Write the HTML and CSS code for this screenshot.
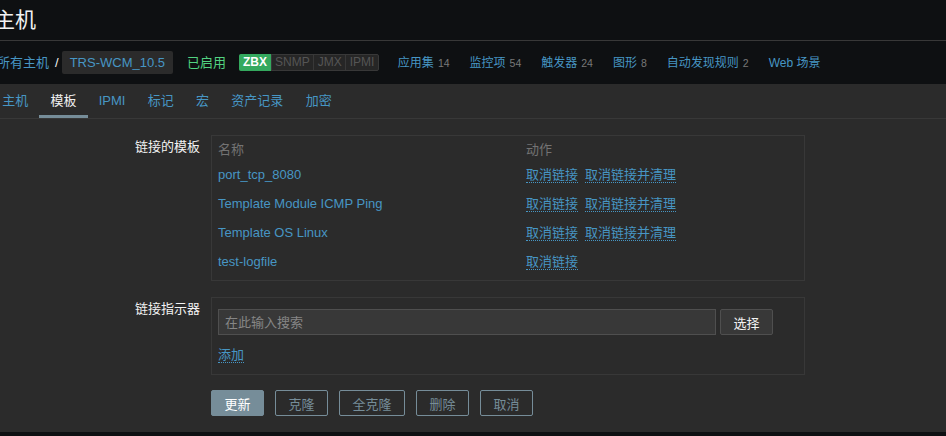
FILE: index.html
```html
<!DOCTYPE html>
<html lang="zh">
<head>
<meta charset="utf-8">
<title>主机</title>
<link rel="stylesheet" href="styles.css">
</head>
<body>
<div class="page">
  <header class="top">
    <h1 class="title">主机</h1>
  </header>
  <nav class="crumbs">
    <a class="link crumb-first">所有主机</a>
    <span class="slash">/</span>
    <span class="crumb-box">TRS-WCM_10.5</span>
    <span class="enabled">已启用</span>
    <span class="status">
      <span class="st st-on">ZBX</span><span class="st">SNMP</span><span class="st">JMX</span><span class="st">IPMI</span>
    </span>
    <ul class="entities">
      <li><a class="link">应用集</a><span class="count">14</span></li>
      <li><a class="link">监控项</a><span class="count">54</span></li>
      <li><a class="link">触发器</a><span class="count">24</span></li>
      <li><a class="link">图形</a><span class="count">8</span></li>
      <li><a class="link">自动发现规则</a><span class="count">2</span></li>
      <li><a class="link">Web 场景</a></li>
    </ul>
  </nav>
  <ul class="tabs">
    <li class="tab">主机</li>
    <li class="tab active">模板</li>
    <li class="tab">IPMI</li>
    <li class="tab">标记</li>
    <li class="tab">宏</li>
    <li class="tab">资产记录</li>
    <li class="tab">加密</li>
  </ul>
  <main class="form">
    <div class="field">
      <label class="label">链接的模板</label>
      <div class="box tpl-box">
        <div class="tpl-row tpl-head">
          <span>名称</span><span>动作</span>
        </div>
        <div class="tpl-row">
          <a class="link">port_tcp_8080</a>
          <span class="actions"><a class="act">取消链接</a><a class="act">取消链接并清理</a></span>
        </div>
        <div class="tpl-row">
          <a class="link">Template Module ICMP Ping</a>
          <span class="actions"><a class="act">取消链接</a><a class="act">取消链接并清理</a></span>
        </div>
        <div class="tpl-row">
          <a class="link">Template OS Linux</a>
          <span class="actions"><a class="act">取消链接</a><a class="act">取消链接并清理</a></span>
        </div>
        <div class="tpl-row">
          <a class="link">test-logfile</a>
          <span class="actions"><a class="act">取消链接</a></span>
        </div>
      </div>
    </div>
    <div class="field">
      <label class="label">链接指示器</label>
      <div class="box link-box">
        <div class="search-line">
          <input class="search" type="text" placeholder="在此输入搜索">
          <button class="btn-grey" type="button">选择</button>
        </div>
        <a class="act add">添加</a>
      </div>
    </div>
    <div class="buttons">
      <button class="btn btn-primary" type="button">更新</button>
      <button class="btn" type="button">克隆</button>
      <button class="btn" type="button">全克隆</button>
      <button class="btn" type="button">删除</button>
      <button class="btn" type="button">取消</button>
    </div>
  </main>
</div>
</body>
</html>
```

FILE: styles.css
```css
html, body {
  margin: 0;
  padding: 0;
}
body {
  background: #0e1012;
  color: #f2f2f2;
  font-family: "Liberation Sans", "Noto Sans CJK SC", sans-serif;
  font-size: 13px;
  line-height: 16px;
  overflow: hidden;
}
a { text-decoration: none; cursor: pointer; }
ul { list-style: none; margin: 0; padding: 0; }

.page {
  height: 432px;
  display: flex;
  flex-direction: column;
  background: #2b2b2b;
}

.top {
  height: 40px;
  background: #0e1012;
  border-bottom: 1px solid #383838;
  display: flex;
  align-items: center;
}
.title {
  margin: 0 0 0 -6px;
  font-size: 21px;
  font-weight: normal;
  line-height: 26px;
  color: #f2f2f2;
}

.crumbs {
  height: 43px;
  background: #0e1012;
  display: flex;
  align-items: center;
  margin-left: -3px;
}
.link { color: #4796c4; }
.slash {
  margin: 0 3px 0 6px;
  color: #f2f2f2;
}
.crumb-box {
  background: #2b2b2b;
  color: #4796c4;
  border-radius: 2px;
  height: 23px;
  line-height: 23px;
  padding: 0 8px;
}
.enabled {
  color: #52d281;
  margin-left: 14px;
}
.status {
  margin-left: 13px;
  display: flex;
  border: 1px solid #383838;
  border-radius: 2px;
  background: #262626;
  height: 15px;
  font-size: 12px;
  line-height: 15px;
}
.st {
  color: #555555;
  padding: 0 3.5px;
  border-left: 1px solid #383838;
}
.st:first-child { border-left: none; }
.st-on {
  background: #34a95e;
  color: #ffffff;
  font-weight: bold;
  margin: -1px 0 -1px -1px;
  padding: 1px 3.5px 1px 4px;
  border-radius: 2px 0 0 2px;
}
.entities {
  display: flex;
  gap: 20px;
  margin-left: 19px;
  font-size: 12px;
}
.count {
  color: #787878;
  margin-left: 4px;
  font-size: 10.5px;
}

.tabs {
  display: flex;
  height: 34px;
  border-bottom: 1px solid #383838;
  margin-left: -9px;
}
.tab {
  padding: 0 11.15px;
  line-height: 34px;
  color: #4796c4;
  box-sizing: border-box;
}
.tab.active {
  color: #f2f2f2;
  border-bottom: 3px solid #768d99;
  line-height: 34px;
  height: 34px;
}

.form {
  flex: 1;
  padding-top: 16px;
}
.field {
  display: grid;
  grid-template-columns: 200px 594px;
  column-gap: 11px;
  margin-bottom: 16px;
}
.label {
  text-align: right;
  padding-top: 4px;
  line-height: 16px;
  color: #f2f2f2;
}
.box {
  border: 1px solid #383838;
  box-sizing: border-box;
}
.tpl-box {
  padding: 4px 6px 4px 6px;
}
.tpl-row {
  display: grid;
  grid-template-columns: 308px 1fr;
  height: 29px;
  align-items: center;
}
.tpl-head {
  height: 20px;
  color: #737373;
}
.actions {
  display: flex;
  gap: 7px;
}
.act {
  color: #4796c4;
  border-bottom: 1px dotted #4796c4;
  line-height: 15px;
  display: inline-block;
}

.link-box {
  padding: 11px 6px 0 6px;
  height: 78px;
}
.search-line {
  display: flex;
  gap: 4px;
}
.search {
  width: 498px;
  height: 26px;
  box-sizing: border-box;
  background: #383838;
  border: 1px solid #4f4f4f;
  color: #f2f2f2;
  font-family: inherit;
  font-size: 13px;
  padding: 0 6px;
  margin: 0;
  outline: none;
}
.search::placeholder { color: #868686; }
.btn-grey {
  width: 53px;
  height: 26px;
  box-sizing: border-box;
  background: #383838;
  border: 1px solid #4f4f4f;
  border-radius: 2px;
  color: #f2f2f2;
  font-family: inherit;
  font-size: 13px;
  padding: 0;
  margin: 0;
}
.add {
  margin-top: 12px;
}

.buttons {
  display: flex;
  gap: 11px;
  margin-left: 211px;
  margin-top: -1px;
}
.btn {
  height: 26px;
  box-sizing: border-box;
  padding: 0 12.5px;
  background: transparent;
  border: 1px solid #768d99;
  border-radius: 2px;
  color: #768d99;
  font-family: inherit;
  font-size: 13px;
  margin: 0;
}
.btn-primary {
  background: #768d99;
  color: #ffffff;
}
```
